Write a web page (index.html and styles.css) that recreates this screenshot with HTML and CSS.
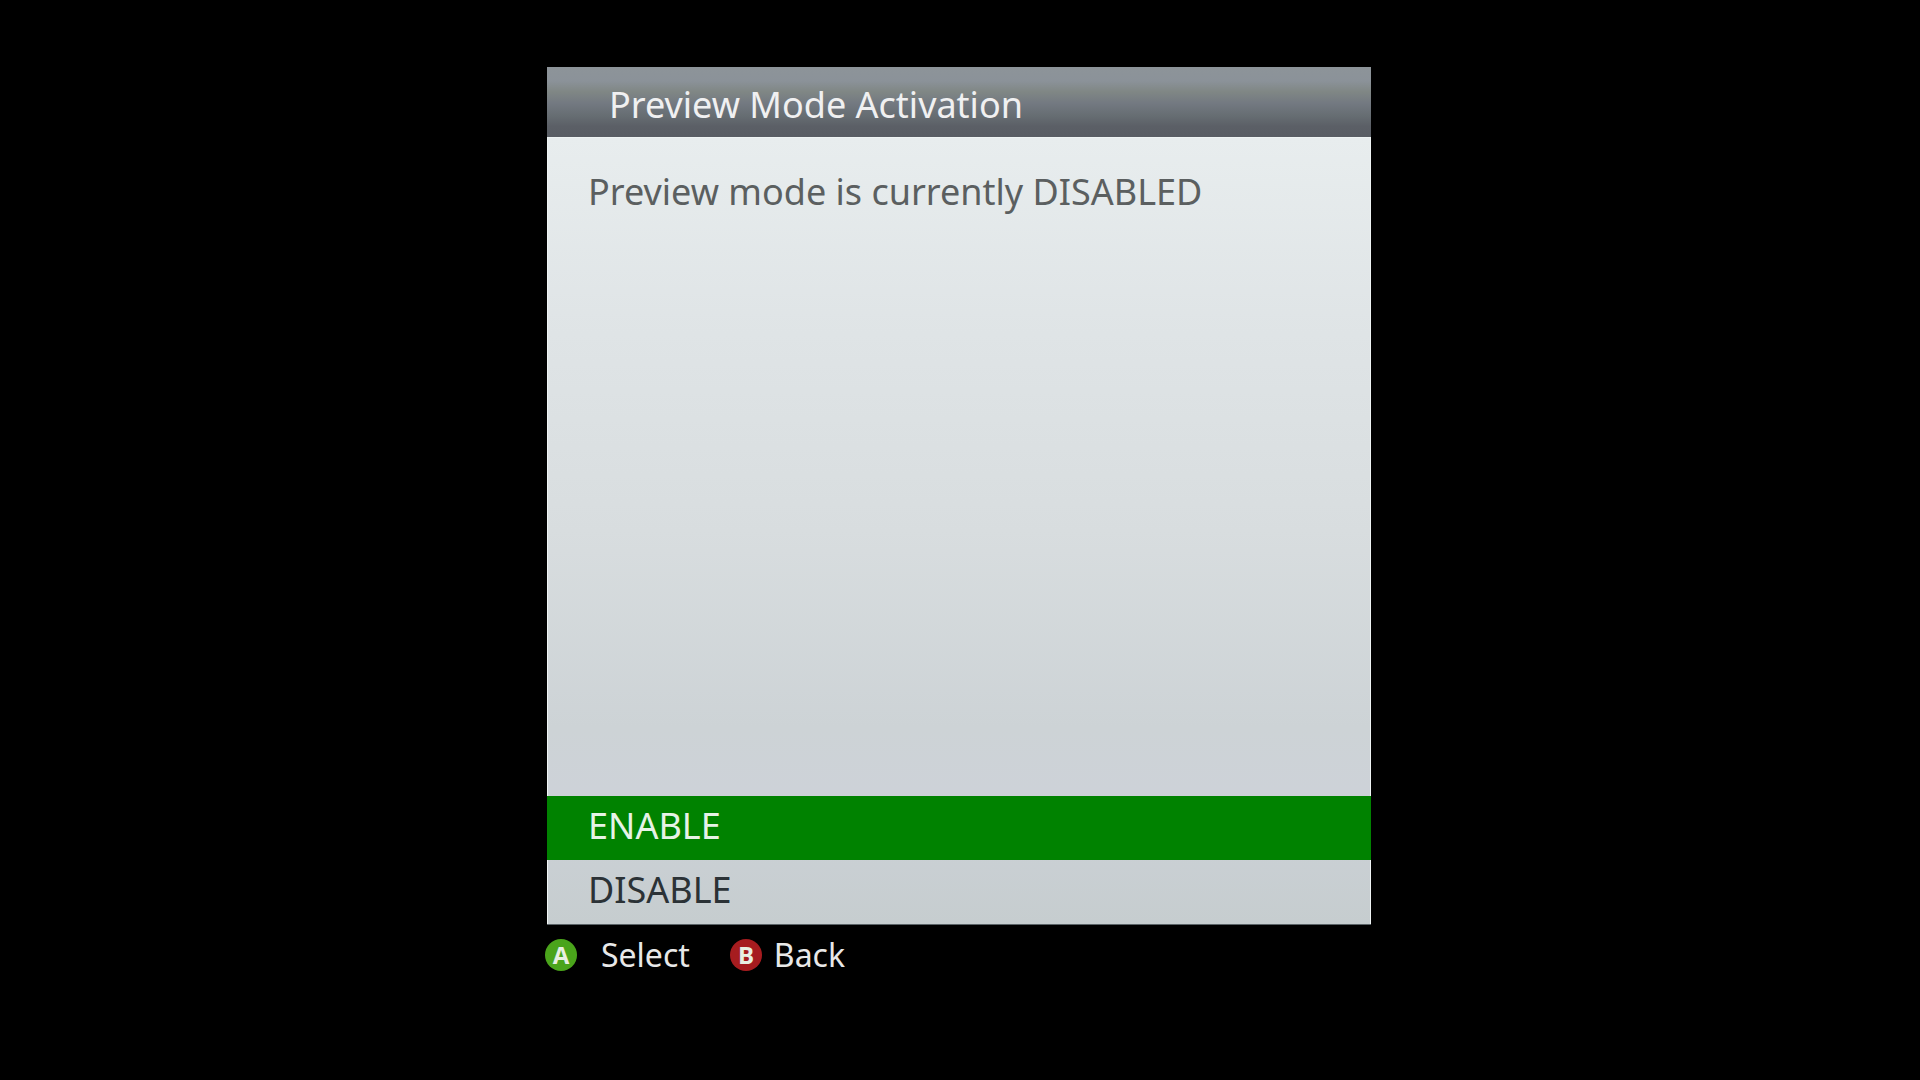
FILE: index.html
```html
<!DOCTYPE html>
<html lang="en">
<head>
<meta charset="utf-8">
<title>Preview Mode Activation</title>
<link rel="stylesheet" href="styles.css">
</head>
<body>
<main class="dialog">
  <section class="panel">
    <header class="panel-header"><h1>Preview Mode Activation</h1></header>
    <div class="panel-body">
      <p class="message">Preview mode is currently DISABLED</p>
      <div class="options">
        <button class="option selected" type="button">ENABLE</button>
        <button class="option" type="button">DISABLE</button>
      </div>
    </div>
  </section>
  <footer class="hints">
    <button class="hint hint-select" type="button">
      <svg class="badge" viewBox="0 0 32 32" aria-hidden="true"><circle cx="16" cy="16" r="16" fill="#4aa41b"/><text x="16" y="25">A</text></svg>
      <span>Select</span>
    </button>
    <button class="hint" type="button">
      <svg class="badge" viewBox="0 0 32 32" aria-hidden="true"><circle cx="16" cy="16" r="16" fill="#a61c1f"/><text x="16" y="25">B</text></svg>
      <span>Back</span>
    </button>
  </footer>
</main>
</body>
</html>
```
FILE: styles.css
```css
* { box-sizing: border-box; }
body {
  margin: 0;
  min-height: 100vh;
  padding: 67px 24px;
  background: #000;
  font-family: "Noto Sans", "Open Sans", sans-serif;
  font-size: 36px;
  line-height: 48px;
}
.dialog { width: 100%; max-width: 826px; margin: 0 auto; padding-right: 2px; }
.panel {
  display: flex;
  flex-direction: column;
  min-height: 858px;
  border-bottom: 1px solid #5b6367;
}
.panel-header {
  padding: 14px 62px 8px;
  background: linear-gradient(#8d9499, #8b9299 20%, #808785 35%, #737981 52%, #666d72 70%, #5b5f66 85%, #595d64);
  color: #f0f0f1;
}
h1 { margin: 0; font-size: 36px; font-weight: 400; }
.panel-body {
  flex: 1;
  display: flex;
  flex-direction: column;
  border: 1px solid #eff4f4;
  border-width: 1px 1px 0;
  background: linear-gradient(#e8edee, #dfe4e6 25%, #d8dddf 50%, #cdd3d6 75%, #cdd2d8 83%, #c6cdcf);
}
.message { margin: 0; padding: 30px 40px; color: #5b5f60; }
.options { margin: auto -1px 0; }
button { border: 0; background: none; font: inherit; }
.option {
  display: block;
  width: 100%;
  height: 64px;
  padding: 4px 41px 8px;
  line-height: 52px;
  text-align: left;
  color: #2b3236;
}
.selected { background: #008200; color: #e6f3e6; }
.hints { display: flex; gap: 40px; margin-left: -2px; padding-top: 6px; }
.hint { display: flex; align-items: center; gap: 12px; padding: 0; color: #e8e8e8; font-size: 32px; }
.hint-select { gap: 24px; }
.badge { width: 32px; height: 32px; }
.badge text { font: 700 24px "Open Sans", sans-serif; text-anchor: middle; fill: #e8efe2; }
```
